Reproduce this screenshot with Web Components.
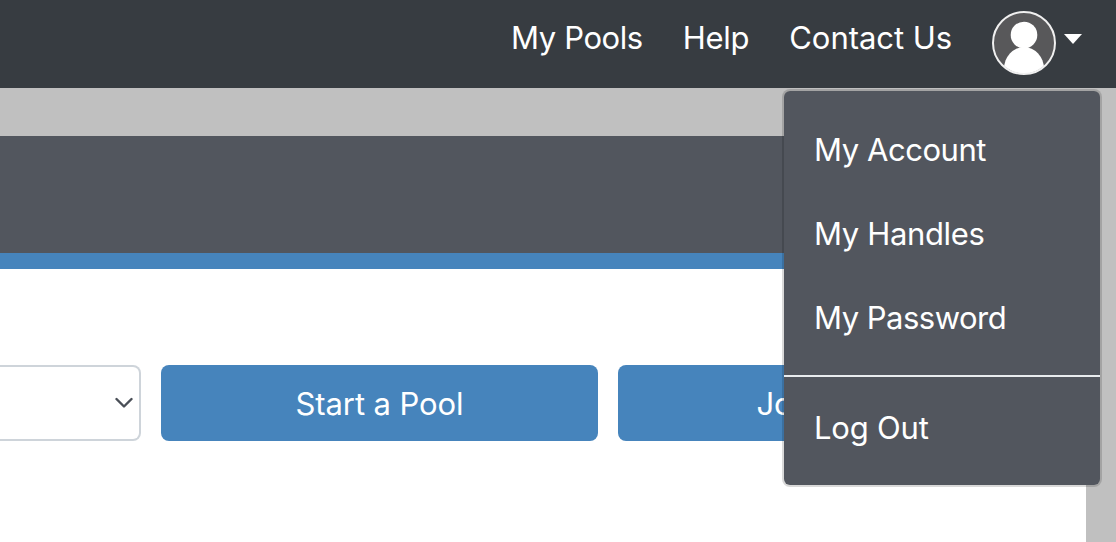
<!DOCTYPE html>
<html>
<head>
<meta charset="utf-8">
<style>
  html, body { margin: 0; height: 100%; overflow: hidden; }
  body {
    background: #c0c0c0;
    font-family: Inter, "Liberation Sans", sans-serif;
    color: #fff;
  }
</style>
</head>
<body>
<app-shell>
  <top-nav slot="nav">
    <nav-link style="--track: -0.4px">My Pools</nav-link>
    <nav-link>Help</nav-link>
    <nav-link style="--track: -0.05px">Contact Us</nav-link>
    <user-toggle></user-toggle>
  </top-nav>
  <user-menu slot="menu">
    <menu-item style="--track: -0.45px">My Account</menu-item>
    <menu-item>My Handles</menu-item>
    <menu-item style="--track: -0.5px">My Password</menu-item>
    <menu-divider></menu-divider>
    <menu-item style="--track: -0.2px">Log Out</menu-item>
  </user-menu>
  <pool-banner slot="banner"></pool-banner>
  <pool-actions slot="content">
    <pool-select></pool-select>
    <pool-button>Start a Pool</pool-button>
    <pool-button>Join a Pool</pool-button>
  </pool-actions>
</app-shell>

<script>
// page frame: nav on top, gray gap, banner, white content
class AppShell extends HTMLElement {
  connectedCallback() {
    const shadow = this.attachShadow({ mode: "open" });
    shadow.innerHTML = `
    <style>
      :host { display: flex; flex-direction: column; height: 542px; position: relative; overflow: hidden; }
      .gap { height: 48px; }
      .main { flex: 1; margin-right: 30px; display: flex; flex-direction: column; min-height: 0; }
    </style>
    <slot name="nav"></slot>
    <div class="gap"></div>
    <div class="main">
      <slot name="banner"></slot>
      <slot name="content"></slot>
    </div>
    <slot name="menu"></slot>
    `;
  }
}
customElements.define("app-shell", AppShell);

class TopNav extends HTMLElement {
  connectedCallback() {
    const shadow = this.attachShadow({ mode: "open" });
    shadow.innerHTML = `
    <style>
      :host {
        display: flex;
        flex: none;
        height: 88px;
        box-sizing: border-box;
        align-items: flex-start;
        justify-content: flex-end;
        gap: 40px;
        padding-right: 34px;
        background: #373c41;
      }
    </style>
    <slot></slot>
    `;
  }
}
customElements.define("top-nav", TopNav);

class NavLink extends HTMLElement {
  connectedCallback() {
    const shadow = this.attachShadow({ mode: "open" });
    shadow.innerHTML = `
    <style>
      :host { display: block; margin-top: 18px; font-size: 31px; line-height: 40px; letter-spacing: var(--track, -0.3px); color: #fff; }
    </style>
    <slot></slot>
    `;
  }
}
customElements.define("nav-link", NavLink);

class UserToggle extends HTMLElement {
  connectedCallback() {
    const shadow = this.attachShadow({ mode: "open" });
    shadow.innerHTML = `
    <style>
      :host { display: flex; align-items: flex-start; gap: 8px; margin-top: 11px; }
      svg { display: block; }
      .caret { width: 0; height: 0; border-left: 9px solid transparent; border-right: 9px solid transparent; border-top: 10px solid #fff; margin-top: 23px; }
    </style>
    <svg width="64" height="64" viewBox="0 0 64 64">
      <defs><clipPath id="c"><circle cx="32" cy="32" r="30.5"/></clipPath></defs>
      <circle cx="32" cy="32" r="31" fill="#58585a"/>
      <g clip-path="url(#c)" fill="#fff">
        <circle cx="32" cy="24" r="13.3"/>
        <ellipse cx="32" cy="58" rx="20" ry="22"/>
      </g>
      <circle cx="32" cy="32" r="31" fill="none" stroke="#f0f0f0" stroke-width="2"/>
    </svg>
    <div class="caret"></div>
    `;
  }
}
customElements.define("user-toggle", UserToggle);

// dropdown is open over the page
class UserMenu extends HTMLElement {
  connectedCallback() {
    const shadow = this.attachShadow({ mode: "open" });
    shadow.innerHTML = `
    <style>
      :host {
        position: absolute;
        left: 782px;
        top: 89px;
        width: 320px;
        height: 398px;
        box-sizing: border-box;
        padding: 17px 0 0;
        background: #52565e;
        background-clip: padding-box;
        border: 2px solid rgba(0, 0, 0, 0.15);
        border-radius: 8px;
        display: block;
      }
    </style>
    <slot></slot>
    `;
  }
}
customElements.define("user-menu", UserMenu);

class MenuItem extends HTMLElement {
  connectedCallback() {
    const shadow = this.attachShadow({ mode: "open" });
    shadow.innerHTML = `
    <style>
      :host { display: block; height: 84px; line-height: 84px; padding-left: 30px; font-size: 31px; letter-spacing: var(--track, -0.35px); color: #fff; }
    </style>
    <slot></slot>
    `;
  }
}
customElements.define("menu-item", MenuItem);

class MenuDivider extends HTMLElement {
  connectedCallback() {
    const shadow = this.attachShadow({ mode: "open" });
    shadow.innerHTML = `
    <style>
      :host { display: block; height: 2px; margin: 15px 0 9px; background: #e9ecef; }
    </style>
    `;
  }
}
customElements.define("menu-divider", MenuDivider);

class PoolBanner extends HTMLElement {
  connectedCallback() {
    const shadow = this.attachShadow({ mode: "open" });
    shadow.innerHTML = `
    <style>
      :host { display: block; flex: none; height: 117px; background: #52565e; border-bottom: 16px solid #4684bc; }
    </style>
    `;
  }
}
customElements.define("pool-banner", PoolBanner);

class PoolActions extends HTMLElement {
  connectedCallback() {
    const shadow = this.attachShadow({ mode: "open" });
    shadow.innerHTML = `
    <style>
      :host { display: flex; flex: 1; gap: 20px; align-items: flex-start; padding-top: 96px; background: #fff; }
    </style>
    <slot></slot>
    `;
  }
}
customElements.define("pool-actions", PoolActions);

class PoolSelect extends HTMLElement {
  connectedCallback() {
    const shadow = this.attachShadow({ mode: "open" });
    shadow.innerHTML = `
    <style>
      :host {
        display: flex;
        flex: none;
        width: 141px;
        height: 76px;
        box-sizing: border-box;
        align-items: center;
        justify-content: flex-end;
        padding-right: 6px;
        background: #fff;
        border: 2px solid #ced4da;
        border-left: 0;
        border-radius: 0 8px 8px 0;
      }
      svg { display: block; }
    </style>
    <svg width="18" height="12" viewBox="0 0 18 12" fill="none" stroke="#4a4f57" stroke-width="2.4" stroke-linecap="round" stroke-linejoin="round">
      <path d="M1.5 2 L9 9.5 L16.5 2"/>
    </svg>
    `;
  }
}
customElements.define("pool-select", PoolSelect);

class PoolButton extends HTMLElement {
  connectedCallback() {
    const shadow = this.attachShadow({ mode: "open" });
    shadow.innerHTML = `
    <style>
      :host {
        display: flex;
        flex: none;
        width: 437px;
        height: 76px;
        align-items: center;
        justify-content: center;
        background: #4684bc;
        border-radius: 8px;
        font-size: 31px;
        letter-spacing: -0.1px;
        color: #fff;
      }
    </style>
    <slot></slot>
    `;
  }
}
customElements.define("pool-button", PoolButton);
</script>
</body>
</html>
